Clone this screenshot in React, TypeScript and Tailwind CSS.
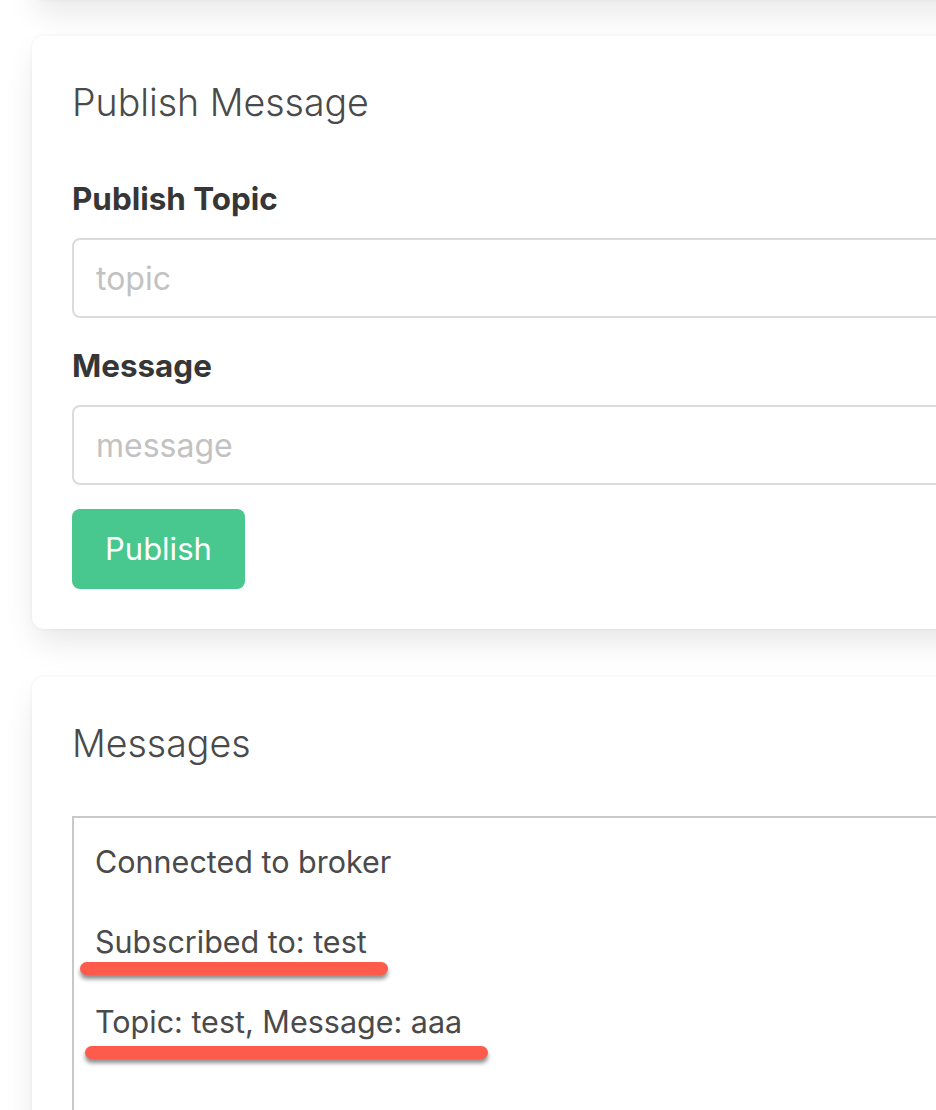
import { useState } from 'react';

const cardShadow = 'shadow-[0_16px_32px_-4px_rgba(10,10,10,0.1),0_0_0_2px_rgba(10,10,10,0.02)]';

type Line = { text: string; mark?: { left: string; width: string; top: string } };

const lines: Line[] = [
  { text: 'Connected to broker' },
  { text: 'Subscribed to: test', mark: { left: '-left-[15px]', width: 'w-[308px]', top: 'top-[44px]' } },
  { text: 'Topic: test, Message: aaa', mark: { left: '-left-[10px]', width: 'w-[403px]', top: 'top-[48px]' } },
];

export default function App() {
  const [topic, setTopic] = useState('');
  const [message, setMessage] = useState('');

  return (
    <div
      className="w-[936px] h-[1110px] overflow-hidden bg-white text-[#4a4a4a]"
      style={{ fontFamily: 'Inter, "Noto Sans", sans-serif' }}
    >
      {/* bottom of the card above, only its shadow shows */}
      <div className={`ml-[32px] w-[1200px] h-[40px] -mt-[40px] bg-white rounded-[12px] ${cardShadow}`} />

      <div className={`ml-[32px] mt-[36px] w-[1200px] bg-white rounded-[12px] p-[40px] ${cardShadow}`}>
        <h1 className="text-[37.5px] font-light leading-[54px] mb-[45px]">Publish Message</h1>

        <label className="block text-[31.4px] font-bold leading-[48px] text-[#363636] mb-[15px]">Publish Topic</label>
        <input
          className="block w-full h-[80px] border-2 border-[#dbdbdb] rounded-[8px] px-[22px] text-[32px] text-[#363636] placeholder:text-[#c2c2c2] outline-none mb-[24px]"
          placeholder="topic"
          value={topic}
          onChange={(e) => setTopic(e.target.value)}
        />

        <label className="block text-[31.4px] font-bold leading-[48px] text-[#363636] mb-[15px]">Message</label>
        <input
          className="block w-full h-[80px] border-2 border-[#dbdbdb] rounded-[8px] px-[22px] text-[32px] text-[#363636] placeholder:text-[#c2c2c2] outline-none mb-[24px]"
          placeholder="message"
          value={message}
          onChange={(e) => setMessage(e.target.value)}
        />

        <button className="h-[80px] px-[33px] rounded-[8px] bg-[#48c78e] text-white text-[31px]">Publish</button>
      </div>

      <div className={`ml-[32px] mt-[48px] w-[1200px] bg-white rounded-[12px] p-[40px] ${cardShadow}`}>
        <h1 className="text-[37.5px] font-light leading-[54px] mb-[45px]">Messages</h1>

        <div className="border-2 border-[#c8c8c8] px-[21px] pt-[20px] pb-[60px] h-[400px] flex flex-col gap-[32px]">
          {lines.map((line) => (
            <div key={line.text} className="relative text-[30.5px] leading-[48px]">
              {line.text}
              {line.mark && (
                <span
                  className={`absolute ${line.mark.left} ${line.mark.width} ${line.mark.top} h-[13px] rounded-full bg-[#fe5b4c] shadow-[0_4px_4px_rgba(0,0,0,0.45)]`}
                />
              )}
            </div>
          ))}
        </div>
      </div>
    </div>
  );
}
